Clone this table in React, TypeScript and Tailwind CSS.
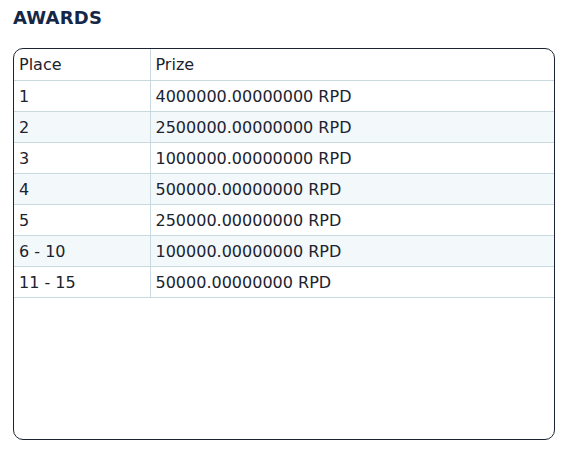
import React from "react";

const rows: [string, string][] = [
  ["1", "4000000.00000000 RPD"],
  ["2", "2500000.00000000 RPD"],
  ["3", "1000000.00000000 RPD"],
  ["4", "500000.00000000 RPD"],
  ["5", "250000.00000000 RPD"],
  ["6 - 10", "100000.00000000 RPD"],
  ["11 - 15", "50000.00000000 RPD"],
];

export default function App() {
  return (
    <div
      className="w-[565px] h-[456px] bg-white pl-[13px] pr-[10px] pt-[7px] text-[#1b2330]"
      style={{ fontFamily: '"DejaVu Sans", Verdana, sans-serif' }}
    >
      <h2 className="text-[18px] leading-[22px] font-bold text-[#152746] tracking-[0.2px]">AWARDS</h2>
      <div className="mt-[19px] h-[392px] rounded-[10px] border border-[#1a2433] overflow-hidden">
        <table className="w-full border-collapse text-[16px]">
          <tbody>
            <tr className="h-[31px] border-b border-[#c9d9e0]">
              <td className="w-[136px] border-r border-[#c9d9e0] pl-[5px] pt-[2px] align-middle">Place</td>
              <td className="pl-[5px] pt-[2px] align-middle">Prize</td>
            </tr>
            {rows.map(([p, z], i) => (
              <tr
                key={i}
                className={`h-[31px] border-b border-[#c9d9e0] ${i % 2 === 1 ? "bg-[#f3f8fb]" : "bg-white"}`}
              >
                <td className="w-[136px] border-r border-[#c9d9e0] pl-[5px] pt-[2px] align-middle">{p}</td>
                <td className="pl-[5px] pt-[2px] align-middle">{z}</td>
              </tr>
            ))}
          </tbody>
        </table>
      </div>
    </div>
  );
}
